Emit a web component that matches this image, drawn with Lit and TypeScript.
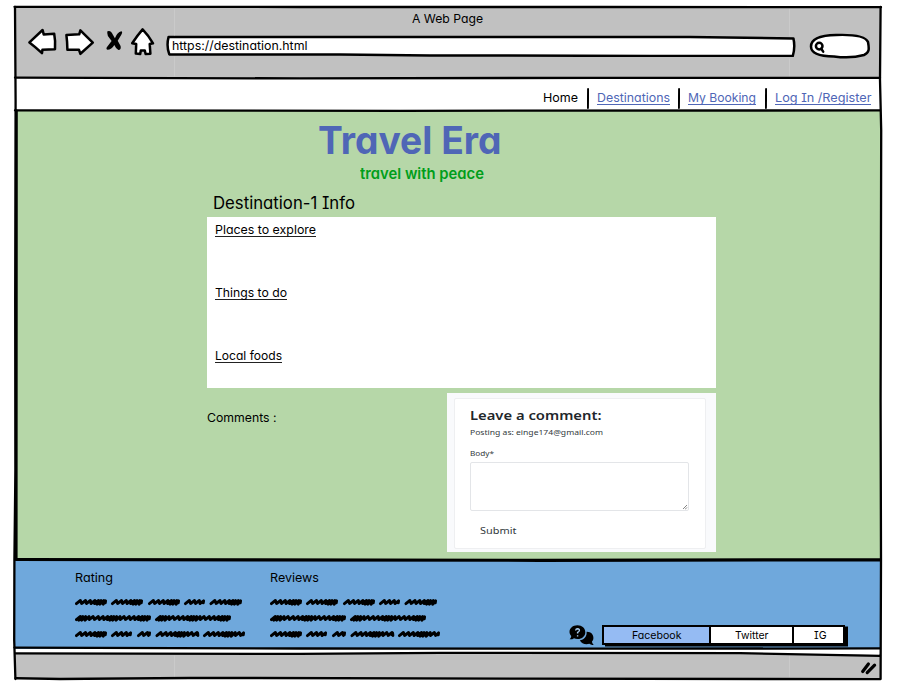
import { LitElement, html, css, svg } from "lit";
import { customElement, property } from "lit/decorators.js";

/** A single line of text, stretched or squeezed to a given width. */
@customElement("fit-text")
class FitText extends LitElement {
  @property({ type: Number }) w = 0;
  static styles = css`
    :host { display: block; white-space: nowrap; flex: none; }
    .line { display: inline-block; transform-origin: 0 50%; vertical-align: top; }
  `;
  async firstUpdated() {
    const line = this.renderRoot.querySelector(".line") as HTMLElement;
    this.style.width = `${this.w}px`;
    const natural = line.getBoundingClientRect().width;
    if (natural) line.style.transform = `scaleX(${this.w / natural})`;
  }
  render() {
    return html`<span class="line"><slot></slot></span>`;
  }
}

/** Greeked copy: rows of scribbled words, each word a [start, end] pair. */
@customElement("scribble-text")
class ScribbleText extends LitElement {
  static styles = css`
    :host { display: block; }
    svg { display: block; }
    path { fill: none; stroke: #000; stroke-width: 2.9; stroke-linecap: round; stroke-linejoin: round; }
  `;
  rows = [
    [[0, 32], [36, 68], [73, 105], [109, 130], [134.5, 167]],
    [[0, 76], [80, 156]],
    [[0, 32], [36, 57], [62, 76], [80.5, 124], [128, 170]],
  ];
  steps = [5.8, 5.4, 5.2, 4.2, 3, 3.4, 4, 4.8];
  word(a: number, b: number, y: number, seed: number) {
    let x = a + 1.4;
    let d = `M${x} ${y + 1.6}`;
    let i = seed;
    while (x < b - 5) {
      const s = this.steps[i % this.steps.length];
      const low = s < 4.1 ? 2.2 : 1.5;
      d += `L${x + 4} ${y - 1.5}L${x + s - 0.6} ${y + low}`;
      x += s - 0.6;
      i++;
    }
    return d + `L${b - 1.4} ${y - 1.1}L${b - 1.7} ${y + 0.9}`;
  }
  render() {
    return html`<svg width="172" height="42" viewBox="0 0 172 42">
      ${this.rows.map((r, n) =>
        r.map(([a, b]) => svg`<path d=${this.word(a, b, 5 + n * 16, n === 1 ? 4 : 0)} />`)
      )}
    </svg>`;
  }
}

@customElement("app-root")
class AppRoot extends LitElement {
  static styles = css`
    :host {
      display: block; width: 906px; height: 691px; background: #fff; overflow: hidden;
      font: 12.3px/16px Inter, "Liberation Sans", sans-serif; color: #000;
      font-feature-settings: "cv11", "cv08";
    }
    * { box-sizing: border-box; }
    svg { display: block; flex: none; }
    .ink { fill: #fff; stroke: #000; stroke-width: 2.5; stroke-linejoin: round; stroke-linecap: round; }
    .window { position: relative; width: 866px; height: 673px; margin-left: 15px; display: flex; flex-direction: column; }
    .page { padding-top: 7px; }
    .frame { position: absolute; left: -15px; top: -7px; pointer-events: none; }
    .chrome { height: 71px; background: #c1c1c1; padding-top: 4px; flex: none; }
    .caption { margin-left: 397px; }
    .tools { display: flex; margin: 0 0 0 11px; height: 30px; }
    .gap { margin-left: 3px; }
    .address { position: relative; margin-left: 8px; width: 632px; height: 30px; padding: 11px 0 0 7px; }
    .address svg { position: absolute; left: 0; top: 0; }
    .address fit-text { position: relative; }
    .search { margin-left: 10px; }
    .nav { height: 33px; flex: none; display: flex; justify-content: flex-end; padding: 12px 10px 0 0; background: #fff; }
    .nav svg { margin: -2px 8px 0 8.5px; }
    .link { color: #4f66b6; }
    .link, .under { border-bottom: 1px solid; height: 15px; line-height: 16px; }
    .main { height: 449px; flex: none; background: #b6d7a8; padding: 9px 0 0 192px; }
    .brand { font-size: 38px; line-height: 40px; font-weight: 700; color: #4f66b6; margin-left: 111px; }
    .slogan { font-size: 15px; line-height: 18px; font-weight: 600; color: #009e1a; margin: 5px 0 0 153px; }
    .heading { font-size: 16.8px; line-height: 20px; margin: 10px 0 4px 5.5px; }
    .info { width: 508.5px; height: 171px; background: #fff; padding: 5px 0 0 8px; }
    .topic { height: 63px; }
    .under { border-color: #222; }
    .comments { display: flex; margin-top: 5px; width: 508.5px; justify-content: space-between; }
    .label { padding-top: 17px; }
    .panel { width: 268.5px; height: 159px; background: #f9fafc; padding: 5px 10px 3px 7px; font-family: "Noto Sans", sans-serif; color: #333a40; }
    .card { height: 151px; background: #fff; border: 1px solid #eeeff1; border-radius: 2px; padding: 7px 0 0 15px; }
    .leave { font-size: 13px; line-height: 18px; font-weight: 600; color: #22262b; }
    .posting { font-size: 7.6px; line-height: 12px; margin-top: 2px; }
    .body { font-size: 7.3px; line-height: 12px; margin-top: 9px; }
    .field { width: 219px; height: 49px; border: 1px solid #e3e5e8; border-radius: 2px; margin-top: 3px; display: flex; justify-content: flex-end; align-items: flex-end; }
    .submit { font-size: 9.6px; line-height: 14px; margin: 13px 0 0 9.5px; }
    .footer { height: 89px; flex: none; background: #6fa8dc; display: flex; padding: 10px 36px 0 60px; }
    .column { width: 195px; }
    .column scribble-text { margin-top: 11px; }
    .social { margin-left: auto; display: flex; padding-top: 53px; }
    .tabs { display: flex; height: 20px; width: 243px; margin: 2px 0 0 7px; border: 2px solid #000; box-shadow: 3px 1.5px 0 #000; background: #fff; font-size: 10.8px; line-height: 17px; }
    .tab { display: flex; justify-content: center; border-left: 2px solid #000; }
    .tab:first-child { border-left: 0; background: #95bbf3; width: 105px; }
    .twitter { width: 83px; }
    .ig { width: 51px; padding-left: 4px; }
    .status { margin-top: 5px; flex: 1; background: #c1c1c1; display: flex; justify-content: flex-end; }
  `;

  frame() {
    return html`<svg class="frame" width="906" height="691" viewBox="0 0 906 691" fill="none" stroke="#000" stroke-width="2.3" stroke-linecap="round">
      <path d="M174.5 9V35M174.5 57V76M789.5 9V36M789.5 59V76M174.5 656V677M789.5 656V677" stroke="#cdcdcd" stroke-width="0.8" />
      <path d="M790 650L879 650V655L789 652.6Z" fill="#fff" stroke="none" />
      <path d="M14.5 6.8L300 7L600 7L881 7.2" />
      <path d="M15 7L15.6 100L15.2 300L15.4 470L14.4 560L14.2 640L15.4 679" />
      <path d="M880.6 7L880 80L881.2 130L880.6 400L881 560L880.6 679" />
      <path d="M15 77.6L300 78.4L600 77.8L880 77.8" />
      <path d="M15 110.3L400 110.8L880 110.4" />
      <path d="M16.4 111L16.2 559" stroke-width="2.8" />
      <path d="M16 559.5L250 559.9L540 560.3L880 559.8" stroke-width="3.2" />
      <path d="M14.5 647.6L300 648.5L600 648.7L880 648.4" />
      <path d="M15.5 653.4L300 653.9L440 652.9L740 653.2L880 655.9" />
      <path d="M15.5 678.2L60 679L190 677.8L520 678.6L880 679.2" />
    </svg>`;
  }

  divider() {
    return html`<svg width="2" height="21" viewBox="0 0 2 21"><path d="M1.1 1L.9 20" stroke="#000" stroke-width="2" stroke-linecap="round" /></svg>`;
  }

  render() {
    return html`<div class="page"><div class="window">
      <div class="chrome">
        <fit-text class="caption" w="71">A Web Page</fit-text>
        <div class="tools">
          <svg width="34" height="30" viewBox="26 27 34 30"><path class="ink" d="M29.4 42.4L42.6 30L43.7 34.4L54.2 33.8Q55.6 41 55 49.2L42.4 49.8L42 53.2Q35 46.5 29.4 42.4Z" /></svg>
          <svg class="gap" width="34" height="30" viewBox="63 27 34 30"><path class="ink" d="M66.4 35L79.2 34.3L80.4 30.4Q88 38 92.8 42.6L80.4 53.8L79 49.8L67.4 49.8Q67.3 42 66.4 35Z" /></svg>
          <svg class="gap" width="29" height="30" viewBox="100 27 29 30">
            <path d="M107.4 31.2Q111 29.8 112.9 34.8L114.9 38.2Q117.2 32.2 121.4 31.3Q123 31.8 121.2 34.9L117.7 40.8L120.6 46Q121.4 49.8 118.4 50Q115.6 48.2 114.3 45Q111.6 49.8 107.4 49.8Q105.5 48.8 107.4 46.5L111.6 41L107.9 36Q106.8 33.2 107.4 31.2Z" />
          </svg>
          <svg width="28" height="30" viewBox="129 27 28 30"><path class="ink" d="M142.6 29.4Q148.5 35.5 153 43.3L149.7 44L150.4 53.7L145.6 54L144.8 50.4L140.8 50.5L140.2 54.1L135.8 53.6L136.2 44L132.2 43.2Q137 36 142.6 29.4Z" /></svg>
          <div class="address">
            <svg width="632" height="30" viewBox="165 27 632 30"><path class="ink" d="M168.6 36.9L480 37L690 37Q740 37.5 793.4 38.4Q795.4 47 792.8 56L650 55.9L430 55.4L340 54.6L169.3 54.4Q166.2 46 168.6 36.9Z" /></svg>
            <fit-text w="135.5">https://destination.html</fit-text>
          </div>
          <svg class="search" width="65" height="32" viewBox="807 27 65 32">
            <path class="ink" d="M811 46.5C811 39.5 820 35.3 836 35C855 34.3 865.5 36.3 868 42C869.3 49 869.4 52.8 864 55C856 57.2 843 57.6 834 56.4C824 56.4 811 54.6 811 46.5Z" />
            <circle class="ink" cx="819.2" cy="46.1" r="3.3" />
            <path class="ink" d="M821.2 48.7L823.2 51.6" />
          </svg>
        </div>
      </div>
      <div class="nav">
        <fit-text w="35">Home</fit-text>${this.divider()}
        <fit-text class="link" w="73">Destinations</fit-text>${this.divider()}
        <fit-text class="link" w="68">My Booking</fit-text>${this.divider()}
        <fit-text class="link" w="96.5">Log In /Register</fit-text>
      </div>
      <div class="main">
        <fit-text class="brand" w="183.5">Travel Era</fit-text>
        <fit-text class="slogan" w="124">travel with peace</fit-text>
        <fit-text class="heading" w="142">Destination-1 Info</fit-text>
        <div class="info">
          <div class="topic"><fit-text class="under" w="101">Places to explore</fit-text></div>
          <div class="topic"><fit-text class="under" w="72">Things to do</fit-text></div>
          <fit-text class="under" w="67">Local foods</fit-text>
        </div>
        <div class="comments">
          <div class="label"><fit-text w="69.5">Comments :</fit-text></div>
          <div class="panel"><div class="card">
            <fit-text class="leave" w="131.5">Leave a comment:</fit-text>
            <fit-text class="posting" w="133">Posting as: einge174@gmail.com</fit-text>
            <fit-text class="body" w="24">Body*</fit-text>
            <div class="field"><svg width="6" height="6" viewBox="0 0 6 6"><path d="M1 5L5 1M3.4 5L5 3.4" stroke="#777" stroke-width=".9" /></svg></div>
            <fit-text class="submit" w="36.5">Submit</fit-text>
          </div></div>
        </div>
      </div>
      <div class="footer">
        <div class="column"><fit-text w="38">Rating</fit-text><scribble-text></scribble-text></div>
        <div class="column"><fit-text w="49">Reviews</fit-text><scribble-text></scribble-text></div>
        <div class="social">
          <svg width="26" height="22" viewBox="569 622 26 22">
            <path d="M577.4 624.3C582.2 624.3 585.3 627.4 585.3 631.2C585.3 635.1 582.2 638 577.6 638C576.2 638 575 637.7 574 637.2C572.6 638.2 571.2 638.5 569.6 638.3C570.7 637.2 571.2 636 571.2 634.9C570.1 633.7 569.5 632.5 569.5 631C569.5 627.2 572.8 624.3 577.4 624.3Z" />
            <path d="M586.6 630.8C591 630.6 593.3 633.6 593.4 636.8C593.4 638.4 592.9 639.6 592 640.6C592.1 641.9 592.6 642.9 593.7 643.7C592 644.2 590.5 643.7 589.4 642.8C585.5 644.1 581.3 642.5 579.9 639.3C584.3 638.5 587 635.5 586.6 630.8Z" />
            <path d="M575.6 629.5Q575.9 627.8 577.6 627.8Q579.5 627.9 579.4 629.5Q579.3 630.6 577.6 631.4V632.6M577.6 634.2V635.6" fill="none" stroke="#a9cdf0" stroke-width="1.4" />
          </svg>
          <div class="tabs">
            <div class="tab"><fit-text w="49.5">Facebook</fit-text></div>
            <div class="tab twitter"><fit-text w="33.5">Twitter</fit-text></div>
            <div class="tab ig"><fit-text w="12.5">IG</fit-text></div>
          </div>
        </div>
      </div>
      <div class="status">
        <svg width="22" height="26" viewBox="859 654 22 26"><path d="M862.7 671.5L868.4 664M867.2 672.6L874.6 665.2" stroke="#000" stroke-width="3.2" stroke-linecap="round" /></svg>
      </div>
      ${this.frame()}
    </div></div>`;
  }
}
